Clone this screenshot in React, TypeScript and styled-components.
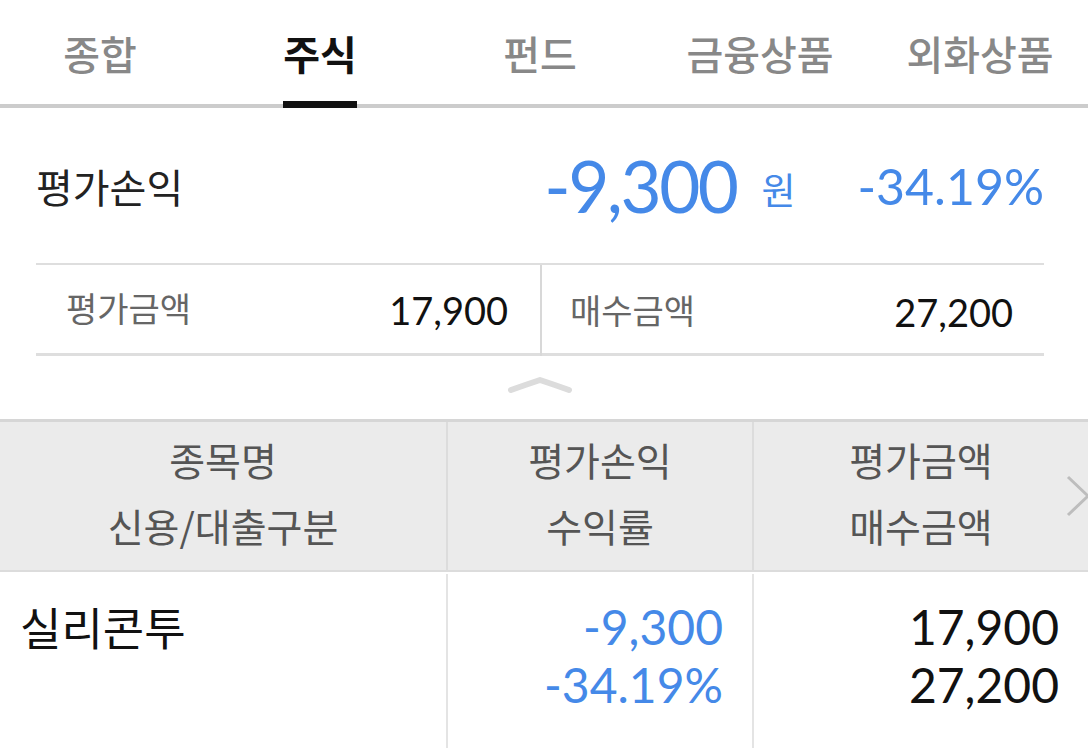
import styled, { createGlobalStyle } from "styled-components";

const GlobalStyle = createGlobalStyle`
  html, body {
    margin: 0;
    padding: 0;
    background: #ffffff;
  }
  body {
    font-family: "Noto Sans CJK KR", "Noto Sans", sans-serif;
    color: #111111;
  }
`;

const BLUE = "#4589e8";
const NUM_FONT = `Lato, "Noto Sans CJK KR", sans-serif`;

const Page = styled.div`
  width: 1088px;
  height: 754px;
  overflow: hidden;
  background: #fff;
`;

/* ---------- tabs ---------- */

const TabBar = styled.nav`
  display: grid;
  grid-template-columns: repeat(5, 220px);
  width: 1100px;
  margin-left: -10px;
  height: 104px;
  border-bottom: 4px solid #cccccc;
`;

const Tab = styled.div`
  display: flex;
  justify-content: center;
  align-items: flex-end;
`;

const TabLabel = styled.span<{ $active?: boolean }>`
  font-size: 40px;
  line-height: 50px;
  padding-bottom: 23px;
  margin-bottom: -4px;
  border-bottom: 7px solid ${(p) => (p.$active ? "#111111" : "transparent")};
  color: ${(p) => (p.$active ? "#111111" : "#888888")};
  font-weight: ${(p) => (p.$active ? 700 : 500)};
  white-space: nowrap;
`;

/* ---------- summary ---------- */

const Summary = styled.section`
  padding: 0 44px 0 36px;
`;

const SummaryHead = styled.div`
  display: flex;
  align-items: center;
  height: 155px;
`;

const SummaryTitle = styled.h2`
  flex: 1;
  margin: 0;
  font-size: 40px;
  line-height: 52px;
  font-weight: 400;
  color: #222222;
`;

const BigAmount = styled.span`
  font-family: ${NUM_FONT};
  font-size: 71px;
  line-height: 80px;
  letter-spacing: -2.5px;
  color: ${BLUE};
`;

const Unit = styled.span`
  font-size: 37px;
  line-height: 46px;
  margin-left: 25px;
  padding-top: 6px;
  color: ${BLUE};
`;

const Rate = styled.span`
  font-family: ${NUM_FONT};
  font-size: 50px;
  line-height: 60px;
  margin-left: 62px;
  color: ${BLUE};
`;

const SummaryBox = styled.div`
  display: grid;
  grid-template-columns: 504px 1fr;
  height: 88px;
  border-top: 2px solid #dedede;
  border-bottom: 3px solid #dedede;
`;

const SummaryCell = styled.div<{ $divided?: boolean }>`
  display: flex;
  justify-content: space-between;
  align-items: center;
  padding: 2px ${(p) => (p.$divided ? "31px" : "32px")} 0 ${(p) => (p.$divided ? "28px" : "30px")};
  border-left: ${(p) => (p.$divided ? "2px solid #d8d8d8" : "none")};
  margin-bottom: ${(p) => (p.$divided ? "-3px" : "0")};
`;

const CellLabel = styled.span`
  font-size: 34px;
  line-height: 44px;
  color: #666666;
  margin-top: -4px;
`;

const CellValue = styled.span`
  font-family: ${NUM_FONT};
  font-size: 38px;
  line-height: 44px;
  color: #111111;
`;

const Handle = styled.div`
  display: flex;
  justify-content: center;
  height: 63px;
  padding: 19px 8px 0 0;
  box-sizing: border-box;
`;

/* ---------- table ---------- */

const HeadRow = styled.div`
  position: relative;
  display: grid;
  grid-template-columns: 446px 306px 1fr;
  height: 148px;
  background: #ebebeb;
  border-top: 3px solid #d6d6d6;
  border-bottom: 2px solid #dcdcdc;
`;

const HeadCell = styled.div<{ $divided?: boolean }>`
  display: flex;
  flex-direction: column;
  align-items: center;
  padding-top: 4px;
  border-left: ${(p) => (p.$divided ? "2px solid #dcdcdc" : "none")};
  font-size: 39px;
  line-height: 66px;
  color: #555555;
`;

const MoreArrow = styled.svg`
  position: absolute;
  left: 1066px;
  top: 53px;
`;

const BodyRow = styled.div`
  display: grid;
  grid-template-columns: 446px 306px 1fr;
  height: 174px;
  margin-top: 2px;
`;

const BodyCell = styled.div<{ $divided?: boolean; $align?: "left" | "right" }>`
  display: flex;
  flex-direction: column;
  align-items: ${(p) => (p.$align === "right" ? "flex-end" : "flex-start")};
  padding: 24px 0 0 0;
  padding-left: ${(p) => (p.$align === "right" ? "0" : "20px")};
  padding-right: ${(p) => (p.$align === "right" ? "29px" : "0")};
  border-left: ${(p) => (p.$divided ? "2px solid #e4e4e4" : "none")};
`;

const StockName = styled.span`
  font-size: 45px;
  line-height: 58px;
  color: #111111;
`;

const NumLine = styled.span<{ $blue?: boolean }>`
  font-family: ${NUM_FONT};
  font-size: 48px;
  line-height: 58px;
  color: ${(p) => (p.$blue ? BLUE : "#111111")};
`;

const tabs = ["종합", "주식", "펀드", "금융상품", "외화상품"];

export default function App() {
  return (
    <Page>
      <GlobalStyle />
      <TabBar>
        {tabs.map((t) => (
          <Tab key={t}>
            <TabLabel $active={t === "주식"}>{t}</TabLabel>
          </Tab>
        ))}
      </TabBar>

      <Summary>
        <SummaryHead>
          <SummaryTitle>평가손익</SummaryTitle>
          <BigAmount>-9,300</BigAmount>
          <Unit>원</Unit>
          <Rate>-34.19%</Rate>
        </SummaryHead>
        <SummaryBox>
          <SummaryCell>
            <CellLabel>평가금액</CellLabel>
            <CellValue>17,900</CellValue>
          </SummaryCell>
          <SummaryCell $divided>
            <CellLabel>매수금액</CellLabel>
            <CellValue>27,200</CellValue>
          </SummaryCell>
        </SummaryBox>
      </Summary>

      <Handle>
        <svg width="66" height="20" viewBox="0 0 66 20">
          <path
            d="M4 15 Q18 10 33 5 Q48 10 62 15"
            fill="none"
            stroke="#dcdcdc"
            strokeWidth="6"
            strokeLinecap="round"
            strokeLinejoin="round"
          />
        </svg>
      </Handle>

      <HeadRow>
        <HeadCell>
          <span>종목명</span>
          <span>신용/대출구분</span>
        </HeadCell>
        <HeadCell $divided>
          <span>평가손익</span>
          <span>수익률</span>
        </HeadCell>
        <HeadCell $divided>
          <span>평가금액</span>
          <span>매수금액</span>
        </HeadCell>
        <MoreArrow width="30" height="42" viewBox="0 0 30 42">
          <path d="M2 2 L22 21 L2 40" fill="none" stroke="#bdbdbd" strokeWidth="3" />
        </MoreArrow>
      </HeadRow>

      <BodyRow>
        <BodyCell>
          <StockName>실리콘투</StockName>
        </BodyCell>
        <BodyCell $divided $align="right">
          <NumLine $blue>-9,300</NumLine>
          <NumLine $blue>-34.19%</NumLine>
        </BodyCell>
        <BodyCell $divided $align="right">
          <NumLine>17,900</NumLine>
          <NumLine>27,200</NumLine>
        </BodyCell>
      </BodyRow>
    </Page>
  );
}
